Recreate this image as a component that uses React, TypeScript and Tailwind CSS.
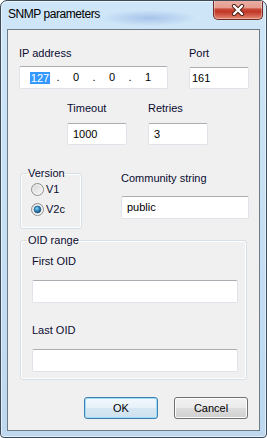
import React from "react";

const field =
  "bg-white border border-[#e2e3ea] border-t-[#abadb3] rounded-[2px] text-black";

function Radio({ checked }: { checked?: boolean }) {
  return (
    <svg width="13" height="13" viewBox="0 0 13 13" className="shrink-0">
      <defs>
        <linearGradient id={checked ? "rfc" : "rfu"} x1="0" y1="0" x2="1" y2="1">
          <stop offset="0" stopColor="#d2d2d2" />
          <stop offset="1" stopColor="#fbfbfb" />
        </linearGradient>
        <radialGradient id="dot" cx="0.4" cy="0.35" r="0.7">
          <stop offset="0" stopColor="#8fd6f9" />
          <stop offset="0.5" stopColor="#2d8ac4" />
          <stop offset="1" stopColor="#12466e" />
        </radialGradient>
      </defs>
      <circle cx="6.5" cy="6.5" r="6" fill={`url(#${checked ? "rfc" : "rfu"})`} stroke="#8f8f8f" strokeWidth="1" />
      <circle cx="6.5" cy="6.5" r="4.6" fill="none" stroke="#f4f4f4" strokeWidth="0.8" />
      {checked && <circle cx="6.5" cy="6.5" r="3.4" fill="url(#dot)" stroke="#1b4f78" strokeWidth="0.6" />}
    </svg>
  );
}

export default function App() {
  return (
    <div
      className="relative w-[267px] h-[438px] overflow-hidden rounded-t-[7px] rounded-b-[4px] border border-[#3e4b58] bg-[radial-gradient(ellipse_48px_8px_at_148px_17px,#a6c3ea_0%,rgba(166,195,234,0)_100%),linear-gradient(#cfe6f8,#bdd8ef)] shadow-[inset_0_0_0_1px_rgba(255,255,255,0.55)]"
      style={{ fontFamily: '"Liberation Sans", Arial, sans-serif' }}
    >
      <div className="h-[28px] pl-[7px] pt-[6px] text-[12px] leading-[15px] tracking-[-0.45px] text-black">
        SNMP parameters
      </div>

      <div className="absolute top-[-1px] right-[3px] w-[50px] h-[20px] rounded-b-[5px] border border-t-0 border-[#6e2b22] bg-[linear-gradient(#eab0a6_0%,#e69d90_40%,#c94837_48%,#c13727_62%,#d4604e_82%,#e28b74_100%)] shadow-[inset_0_0_0_1px_rgba(255,255,255,0.35)] flex items-center justify-center">
        <svg width="14" height="12" viewBox="0 0 14 12">
          <path d="M3 2 L11 10 M11 2 L3 10" stroke="#4a1d16" strokeWidth="4.2" strokeLinecap="round" />
          <path d="M3 2 L11 10 M11 2 L3 10" stroke="#ffffff" strokeWidth="2.4" strokeLinecap="round" />
        </svg>
      </div>

      <div className="mx-[6px] h-[402px] border border-[#6d7b89] bg-[#f0f0f0] text-[11px] leading-[13px] text-[#0b0b30]">
        {/* Row 1 */}
        <div className="flex pt-[17px] pl-[11px]">
          <div className="flex flex-col w-[149px]">
            <span>IP address</span>
            <div className={`${field} mt-[6px] h-[23px] flex items-center pl-[5px]`}>
              <span className="w-[30px] flex justify-center">
                <span className="bg-[#3399ff] text-white leading-[12px] px-[1px]">127</span>
              </span>
              <span className="w-[6px] text-center">.</span>
              <span className="w-[30px] text-center">0</span>
              <span className="w-[6px] text-center">.</span>
              <span className="w-[30px] text-center">0</span>
              <span className="w-[6px] text-center">.</span>
              <span className="w-[30px] text-center">1</span>
            </div>
          </div>
          <div className="flex flex-col w-[60px] ml-[21px]">
            <span>Port</span>
            <div className={`${field} mt-[7px] h-[22px] flex items-center pl-[2px]`}>161</div>
          </div>
        </div>

        {/* Row 2 */}
        <div className="flex mt-[13px] pl-[59px]">
          <div className="flex flex-col w-[60px]">
            <span>Timeout</span>
            <div className={`${field} mt-[8px] h-[22px] flex items-center pl-[5px]`}>1000</div>
          </div>
          <div className="flex flex-col w-[60px] ml-[21px]">
            <span>Retries</span>
            <div className={`${field} mt-[8px] h-[22px] flex items-center pl-[5px]`}>3</div>
          </div>
        </div>

        {/* Row 3 */}
        <div className="flex items-start mt-[22px] pl-[12px]">
          <fieldset className="w-[62px] h-[62px] border border-[#d5dfe5] rounded-[3px] shadow-[inset_0_0_0_1px_#ffffff] pl-[10px]">
            <legend className="ml-[-4px] px-[1px]">Version</legend>
            <div className="flex items-center gap-[2px] mt-[3px] h-[13px]">
              <Radio />
              <span>V1</span>
            </div>
            <div className="flex items-center gap-[2px] mt-[7px] h-[13px]">
              <Radio checked />
              <span>V2c</span>
            </div>
          </fieldset>
          <div className="flex flex-col ml-[39px] mt-[5px] w-[128px]">
            <span>Community string</span>
            <div className={`${field} mt-[11px] h-[23px] flex items-center pl-[5px]`}>public</div>
          </div>
        </div>

        {/* Row 4 */}
        <fieldset className="ml-[12px] mt-[5px] w-[227px] h-[146px] border border-[#d5dfe5] rounded-[3px] shadow-[inset_0_0_0_1px_#ffffff] pl-[11px] pr-[8px]">
          <legend className="ml-[-5px] px-[1px]">OID range</legend>
          <div className="mt-[8px]">First OID</div>
          <div className={`${field} mt-[12px] h-[23px] w-[206px]`} />
          <div className="mt-[21px]">Last OID</div>
          <div className={`${field} mt-[12px] h-[23px] w-[206px]`} />
        </fieldset>

        {/* Buttons */}
        <div className="flex justify-end gap-[16px] pr-[11px] mt-[17px] text-black">
          <div className="w-[74px] h-[22px] rounded-[3px] border border-[#3c7fb1] shadow-[inset_0_0_0_1px_#9fdcf8] bg-[linear-gradient(#f2f9fd_0%,#e6f1f8_48%,#d6e7f2_52%,#cfe2ef_100%)] flex items-center justify-center">
            OK
          </div>
          <div className="w-[74px] h-[22px] rounded-[3px] border border-[#707070] shadow-[inset_0_0_0_1px_#fcfcfc] bg-[linear-gradient(#f2f2f2_0%,#ebebeb_48%,#dddddd_52%,#cfcfcf_100%)] flex items-center justify-center">
            Cancel
          </div>
        </div>
      </div>
    </div>
  );
}
